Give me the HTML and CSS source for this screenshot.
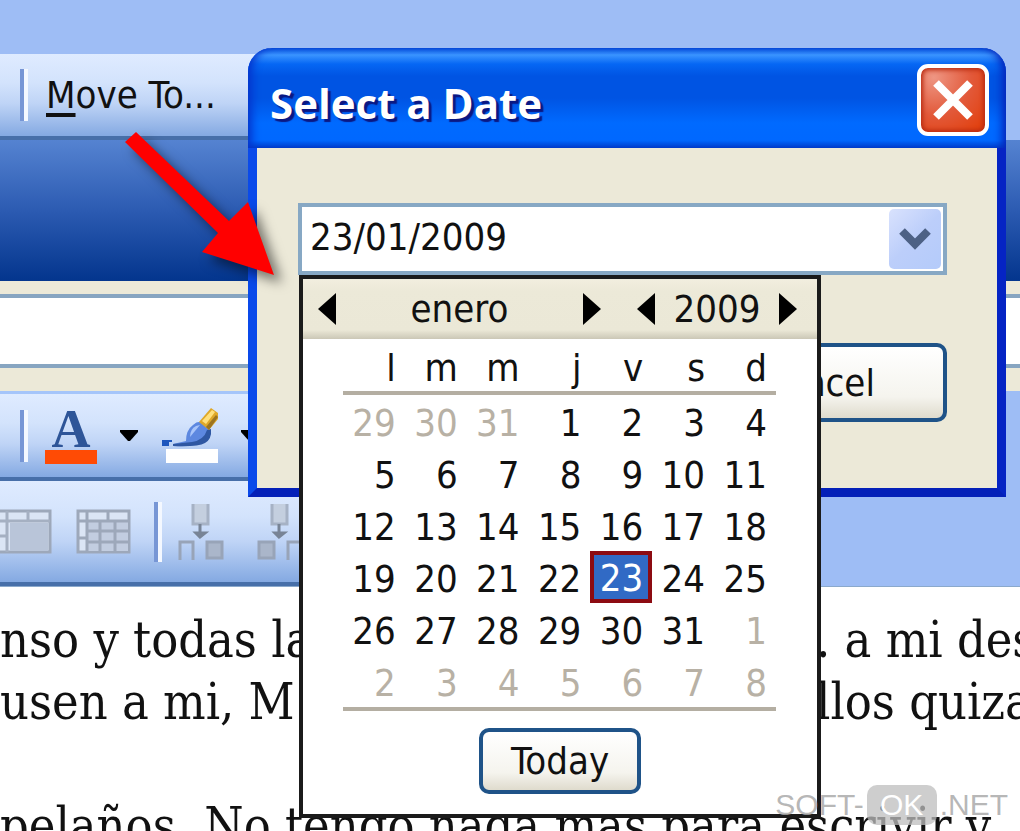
FILE: index.html
```html
<!DOCTYPE html>
<html lang="es">
<head>
<meta charset="utf-8">
<title>Select a Date</title>
<link rel="stylesheet" href="styles.css">
</head>
<body>
<main class="app">
  <div class="toolbar menu-bar">
    <span class="separator"></span>
    <button class="menu-item" type="button"><u>M</u>ove To...</button>
  </div>
  <div class="banner"></div>
  <div class="subject-row"><input class="subject" type="text" aria-label="Asunto"></div>
  <div class="toolbar format-bar">
    <span class="separator"></span>
    <button class="tool font-color" type="button" aria-label="Font color"><span class="letter">A</span><span class="swatch orange"></span></button>
    <button class="tool drop" type="button" aria-label="Font color options"><svg width="18" height="11" viewBox="0 0 18 11"><path d="M0 0H18V2L10 11H8L0 2Z"/></svg></button>
    <button class="tool highlight" type="button" aria-label="Highlight">
      <svg width="56" height="40" viewBox="0 0 56 40">
        <path d="M0 32H10V34H7V38H0Z" fill="#1c55bd"/>
        <path d="M11 38V36L24 33Q24 22 31 17Q35 13 40 14L48 22Q50 30 43 34Q34 39 11 38Z" fill="#5d88e0"/>
        <path d="M28 29Q28 21 34 18L38 17L33 23Z" fill="#a9c5fa"/>
        <path d="M11 38V36L30 34Q42 32 45 22L49 21Q50 31 43 35Q36 39 11 38Z" fill="#2f57a2"/>
        <path d="M37 14L49 0L56 5V11L47 22Z" fill="#dfa828"/>
        <path d="M40 13L50 2L53 4L44 16Z" fill="#ffe07c"/>
        <path d="M56 9L47 22L44 19L54 7Z" fill="#9c7420"/>
      </svg>
      <span class="swatch white"></span>
    </button>
    <button class="tool drop" type="button" aria-label="Highlight options"><svg width="18" height="11" viewBox="0 0 18 11"><path d="M0 0H18V2L10 11H8L0 2Z"/></svg></button>
  </div>
  <div class="toolbar table-bar">
    <button class="tool" type="button" aria-label="Merge cells" disabled>
      <svg width="52" height="46" viewBox="0 0 52 46">
        <rect x="-6" y="2" width="56" height="41" fill="#dbe5f5" stroke="#9da8ba" stroke-width="3"/>
        <path d="M0 12H50M28 2V12M7 2V43M0 27H7" stroke="#a5b0c2" stroke-width="3"/>
        <rect x="10" y="14" width="38" height="28" fill="#b9c5d9"/>
      </svg>
    </button>
    <button class="tool" type="button" aria-label="Table grid" disabled>
      <svg width="56" height="46" viewBox="0 0 56 46">
        <rect x="2" y="2" width="51" height="41" fill="#dbe5f5" stroke="#9da8ba" stroke-width="3"/>
        <rect x="12" y="13" width="40" height="29" fill="#c2cde0"/>
        <path d="M2 12H53M32 2V12M11 2V43M2 29H11M24 12V43M39 12V43M11 22H53M11 33H53" stroke="#9da8ba" stroke-width="3"/>
      </svg>
    </button>
    <span class="separator"></span>
    <button class="tool" type="button" aria-label="Split columns" disabled>
      <svg width="46" height="56" viewBox="0 0 46 56">
        <path d="M15 0V20H30V0" fill="#c4cfdf" stroke="#a6b2c5" stroke-width="3"/>
        <path d="M22 20V31M18 29H27L22 33Z" fill="#788496" stroke="#788496" stroke-width="3"/>
        <path d="M2 56V38H15V56" fill="none" stroke="#98a4b8" stroke-width="3"/>
        <path d="M29 54V38H44V54Z" fill="#aab6ca" stroke="#98a4b8" stroke-width="3"/>
      </svg>
    </button>
    <button class="tool" type="button" aria-label="Join columns" disabled>
      <svg width="46" height="56" viewBox="0 0 46 56">
        <path d="M15 0V20H30V0" fill="#c4cfdf" stroke="#a6b2c5" stroke-width="3"/>
        <path d="M22 20V31M18 29H27L22 33Z" fill="#788496" stroke="#788496" stroke-width="3"/>
        <path d="M2 54V38H17V54Z" fill="#aab6ca" stroke="#98a4b8" stroke-width="3"/>
        <path d="M31 56V38H44V56" fill="none" stroke="#98a4b8" stroke-width="3"/>
      </svg>
    </button>
  </div>
  <article class="document">
    <p><span class="start">nso y todas la</span><span>. a mi des</span></p>
    <p><span class="start">usen a mi, M</span><span>llos quiza</span></p>
    <p class="blank"></p>
    <p class="last">pelaños. No tengo nada mas para escrivir y</p>
  </article>

  <section class="dialog" role="dialog" aria-labelledby="dialog-title">
    <header class="title-bar">
      <h1 id="dialog-title">Select a Date</h1>
      <button class="close" type="button" aria-label="Close"><svg width="40" height="40" viewBox="0 0 40 40"><path d="M3 3L37 37M37 3L3 37" stroke="#fff" stroke-width="8"/></svg></button>
    </header>
    <div class="dialog-body">
      <div class="date-field">
        <input type="text" value="23/01/2009" aria-label="Date">
        <button class="open" type="button" aria-label="Open calendar"><svg width="32" height="22" viewBox="0 0 32 22"><path d="M3 3L16 16L29 3" fill="none" stroke="#4d6185" stroke-width="8"/></svg></button>
        <div class="calendar">
          <div class="calendar-head">
            <button type="button" aria-label="Previous month"><svg width="18" height="32" viewBox="0 0 18 32"><path d="M18 0V32L0 16Z"/></svg></button>
            <span class="month">enero</span>
            <button type="button" aria-label="Next month"><svg width="18" height="32" viewBox="0 0 18 32"><path d="M0 0V32L18 16Z"/></svg></button>
            <button class="year-back" type="button" aria-label="Previous year"><svg width="18" height="32" viewBox="0 0 18 32"><path d="M18 0V32L0 16Z"/></svg></button>
            <span class="year">2009</span>
            <button type="button" aria-label="Next year"><svg width="18" height="32" viewBox="0 0 18 32"><path d="M0 0V32L18 16Z"/></svg></button>
          </div>
          <table class="days">
            <thead><tr><th>l</th><th>m</th><th>m</th><th>j</th><th>v</th><th>s</th><th>d</th></tr></thead>
            <tbody>
              <tr><td class="other"><button>29</button></td><td class="other"><button>30</button></td><td class="other"><button>31</button></td><td><button>1</button></td><td><button>2</button></td><td><button>3</button></td><td><button>4</button></td></tr>
              <tr><td><button>5</button></td><td><button>6</button></td><td><button>7</button></td><td><button>8</button></td><td><button>9</button></td><td><button>10</button></td><td><button>11</button></td></tr>
              <tr><td><button>12</button></td><td><button>13</button></td><td><button>14</button></td><td><button>15</button></td><td><button>16</button></td><td><button>17</button></td><td><button>18</button></td></tr>
              <tr><td><button>19</button></td><td><button>20</button></td><td><button>21</button></td><td><button>22</button></td><td class="selected"><button>23</button></td><td><button>24</button></td><td><button>25</button></td></tr>
              <tr><td><button>26</button></td><td><button>27</button></td><td><button>28</button></td><td><button>29</button></td><td><button>30</button></td><td><button>31</button></td><td class="other"><button>1</button></td></tr>
              <tr><td class="other"><button>2</button></td><td class="other"><button>3</button></td><td class="other"><button>4</button></td><td class="other"><button>5</button></td><td class="other"><button>6</button></td><td class="other"><button>7</button></td><td class="other"><button>8</button></td></tr>
            </tbody>
          </table>
          <button class="push today" type="button">Today</button>
        </div>
      </div>
      <button class="push cancel" type="button">Cancel</button>
    </div>
  </section>

  <svg class="pointer" width="180" height="180" viewBox="0 0 180 180" aria-hidden="true">
    <path d="M16 1L109 90L128 71L154 144L82 121L98 102L5 11Z" fill="#f00"/>
  </svg>
  <div class="watermark"><span>SOFT-</span><span class="ok">OK</span><span>.NET</span></div>
</main>
</body>
</html>
```

FILE: styles.css
```css
* { box-sizing: border-box; }

body {
  margin: 0;
  font-family: "DejaVu Sans Condensed", "DejaVu Sans", sans-serif;
  font-size: 38px;
  color: #111;
}

button, input { font: inherit; color: inherit; }
button { padding: 0; border: 0; background: none; }
svg { display: block; }

.app {
  position: relative;
  display: flex;
  flex-direction: column;
  height: 100vh;
  overflow: hidden;
  padding-top: 54px;
  background: #9ebdf5;
}

.app > div, .document { flex: none; }

.toolbar {
  display: flex;
  align-items: center;
  width: 50%;
  border-bottom: 4px solid #476fa9;
  background: linear-gradient(#dfebff, #d3e3fc 35%, #bfd4f6 60%, #84a9e2);
}

.separator {
  width: 8px;
  height: 52px;
  border-left: 4px solid #7796d5;
  border-right: 4px solid #f4f8ff;
}

.menu-bar { height: 86px; padding-left: 20px; gap: 18px; }

.menu-item { line-height: 44px; }

.menu-item u { text-decoration-thickness: 4px; text-underline-offset: 5px; }

.banner { height: 141px; background: linear-gradient(#5583d1, #2c5bb2 50%, #03358d); }

.subject-row { padding: 13px 0 23px; background: #ece9d8; }

.subject {
  display: block;
  width: 100%;
  height: 74px;
  border: 4px solid #87a5c1;
  border-width: 4px 0;
  background: #fff;
}

.format-bar {
  height: 90px;
  padding-left: 20px;
  border-top: 3px solid #a5c5fa;
}

.font-color {
  display: flex;
  flex-direction: column;
  align-items: center;
  margin-left: 17px;
}

.letter {
  height: 43px;
  font: bold 54px/44px "Liberation Serif", serif;
  color: #2e5598;
}

.swatch { display: block; width: 52px; height: 14px; }
.orange { background: #ff4b05; }
.white { margin-left: 4px; background: #fff; }
.drop { margin-left: 23px; }
.highlight { margin-left: 24px; }
.highlight svg { margin-bottom: 1px; }

.table-bar { height: 105px; }
.table-bar .tool { margin-right: 24px; }
.table-bar .separator { height: 60px; margin-right: 16px; }
.table-bar .tool + .separator { margin-left: -2px; }
.table-bar .separator + .tool { margin-right: 33px; }

.document {
  height: 300px;
  padding-top: 22px;
  overflow: hidden;
  background: #fff;
  border-top: 1px solid #8ba9cc;
  font: 50px/62px "DejaVu Serif Condensed", "DejaVu Serif", serif;
}

.document p { display: flex; margin: 0; height: 62px; white-space: nowrap; }
.start { flex: none; width: 816px; }

.dialog {
  position: absolute;
  top: 48px;
  left: 248px;
  right: 14px;
  border: solid;
  border-width: 0 9px 9px;
  border-color: #0a3fe0 #0524c4 #0420b8 #0a4aea;
  border-radius: 24px 24px 0 0;
  background: #ece9d8;
}

.title-bar {
  display: flex;
  align-items: center;
  justify-content: space-between;
  height: 100px;
  margin: 0 -9px;
  padding: 4px 17px 0 22px;
  border-radius: 24px 24px 0 0;
  background: linear-gradient(#0855e0, #3a94ff 7%, #0667f4 16%, #0054e3 28%, #0054e3 50%, #006aff 75%, #0068ff 92%, #0141cd);
  box-shadow: inset 8px 0 8px -4px #0434cc, inset -8px 0 8px -4px #0424b8;
}

.title-bar h1 {
  margin: 0;
  padding-top: 6px;
  font: bold 42px/60px "Open Sans", "Noto Sans", sans-serif;
  color: #fff;
  text-shadow: 3px 3px 1px #0a1883;
}

.close {
  display: grid;
  place-items: center;
  width: 72px;
  height: 72px;
  border: 4px solid #fff;
  border-radius: 11px;
  background: radial-gradient(circle at 20% 15%, #ee9683, #e2593a 50%, #e23b05);
  box-shadow: inset 0 0 4px 2px #b92c13;
}

.dialog-body {
  display: flex;
  flex-direction: column;
  align-items: flex-end;
  padding: 55px 50px 66px 41px;
}

.date-field {
  position: relative;
  display: flex;
  align-self: stretch;
  height: 72px;
  padding: 2px;
  border: 4px solid #87a8c4;
  background: #fff;
}

.date-field input {
  flex: 1;
  min-width: 0;
  padding: 0 6px 4px;
  border: 0;
  background: none;
  outline: 0;
}

.open {
  display: grid;
  place-items: center;
  width: 52px;
  border-radius: 5px;
  background: linear-gradient(135deg, #d9e2fd, #bccefa 50%, #b4cbfa);
}

.push {
  border: 4px solid #1f5388;
  border-radius: 10px;
  background: linear-gradient(#fff, #f5f4ee 70%, #dfdbcd);
}

.cancel { width: 260px; height: 79px; margin-top: 68px; }

.calendar {
  position: absolute;
  top: 68px;
  left: -3px;
  z-index: 1;
  width: 522px;
  padding-bottom: 20px;
  border: 4px solid #1b1b1b;
  background: #fff;
}

.calendar-head {
  display: flex;
  align-items: center;
  height: 60px;
  padding: 0 20px 0 15px;
  background: linear-gradient(#f2eedf, #ece9d8 20%, #ebe8d7 85%, #cbc7b6);
}

.month { flex: 1; text-align: center; }
.year-back { margin-left: 36px; }
.year { width: 124px; text-align: center; }

.days {
  width: 433px;
  margin: 0 0 17px 40px;
  border-collapse: separate;
  border-spacing: 0;
  table-layout: fixed;
  border-bottom: 4px solid #b4aea2;
}

.days th {
  height: 56px;
  padding: 6px 9px 0 0;
  border-bottom: 4px solid #b4aea2;
  text-align: right;
  font-weight: normal;
  line-height: 44px;
}

.days td { height: 52px; padding: 0; }

.days button {
  display: block;
  width: 100%;
  height: 52px;
  padding: 4px 9px 0 0;
  text-align: right;
  line-height: 48px;
}

.days .other button { color: #b8b1a5; }

.days .selected button {
  padding: 2px 5px 0 0;
  border: 4px solid #8c0b12;
  background: #316ac5;
  color: #fff;
  line-height: 42px;
}

.today { display: block; width: 162px; height: 66px; margin: 0 auto; }

.pointer {
  position: absolute;
  top: 131px;
  left: 120px;
  overflow: visible;
  filter: drop-shadow(8px 8px 6px rgba(0, 0, 0, 0.5));
}

.watermark {
  position: absolute;
  right: 12px;
  bottom: 6px;
  z-index: 2;
  display: flex;
  align-items: center;
  gap: 3px;
  font: 30px/40px "Liberation Sans", sans-serif;
  color: rgba(170, 170, 170, 0.85);
}

.ok {
  width: 70px;
  border-radius: 10px;
  background: rgba(190, 190, 190, 0.75);
  color: #fff;
  text-align: center;
}
```
